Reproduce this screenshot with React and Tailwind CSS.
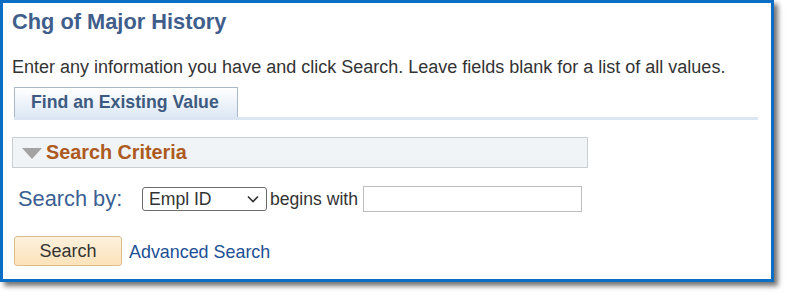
import React from 'react';

const font = { fontFamily: '"Liberation Sans", Arial, sans-serif' };

const App = () => {
  return (
    <div className="w-[789px] h-[297px] bg-white" style={font}>
      {/* Page frame */}
      <div className="w-[774px] h-[282px] border-[3px] border-[#0b6ec4] bg-white shadow-[4px_4px_5px_rgba(0,0,0,0.55)] flex flex-col pl-[9px]">
        <h1 className="pt-[6px] text-[21.8px] leading-[26px] font-bold text-[#3f5e8b]">
          Chg of Major History
        </h1>

        <p className="mt-[22px] text-[18px] leading-[20px] text-[#333333]">
          Enter any information you have and click Search. Leave fields blank for a list of all values.
        </p>

        {/* Tab strip */}
        <div className="mt-[10px] ml-[2px] w-[744px] flex border-b-[3px] border-[#dbe6f2]">
          <div className="w-[224px] h-[30px] border border-b-0 border-[#a9b8c9] bg-gradient-to-b from-white to-[#dde8f5] flex items-center pl-[16px] text-[17.7px] font-bold text-[#3d5a80]">
            Find an Existing Value
          </div>
        </div>

        {/* Search Criteria bar */}
        <div className="mt-[17px] w-[576px] h-[31px] border border-[#c9ced3] bg-[#f1f4f6] flex items-center pl-[9px]">
          <svg width="20" height="11" viewBox="0 0 20 11" className="mr-[4px] mt-[1px]">
            <polygon points="0,0 20,0 10,11" fill="#a3a3a3" />
          </svg>
          <span className="text-[19.8px] font-bold text-[#ad5a1e]">Search Criteria</span>
        </div>

        {/* Search by row */}
        <div className="mt-[18px] ml-[6px] h-[26px] flex items-center">
          <span className="w-[124px] text-[21.8px] text-[#3b5f92]">Search by:</span>
          <div className="w-[125px] h-[24px] border border-[#6b6b6b] rounded-[3px] flex items-center justify-between pl-[6px] pr-[7px] text-[17.6px] text-[#333333]">
            <span>Empl ID</span>
            <svg width="12" height="8" viewBox="0 0 12 8">
              <polyline points="1,1.5 6,6.5 11,1.5" fill="none" stroke="#333" strokeWidth="1.6" />
            </svg>
          </div>
          <span className="ml-[3px] text-[17.6px] text-[#333333]">begins with</span>
          <div className="ml-[5px] w-[219px] h-[26px] border border-[#bdbdbd] bg-white" />
        </div>

        {/* Actions */}
        <div className="mt-[24px] ml-[2px] flex items-center">
          <button className="w-[108px] h-[30px] rounded-[3px] border border-[#dcbc8e] bg-gradient-to-b from-[#fdf1dd] to-[#fbe2b9] text-[18px] text-[#333333]">
            Search
          </button>
          <a href="#" className="ml-[7px] mt-[2px] text-[17.9px] text-[#1d4f94]">
            Advanced Search
          </a>
        </div>
      </div>
    </div>
  );
};

export default App;
